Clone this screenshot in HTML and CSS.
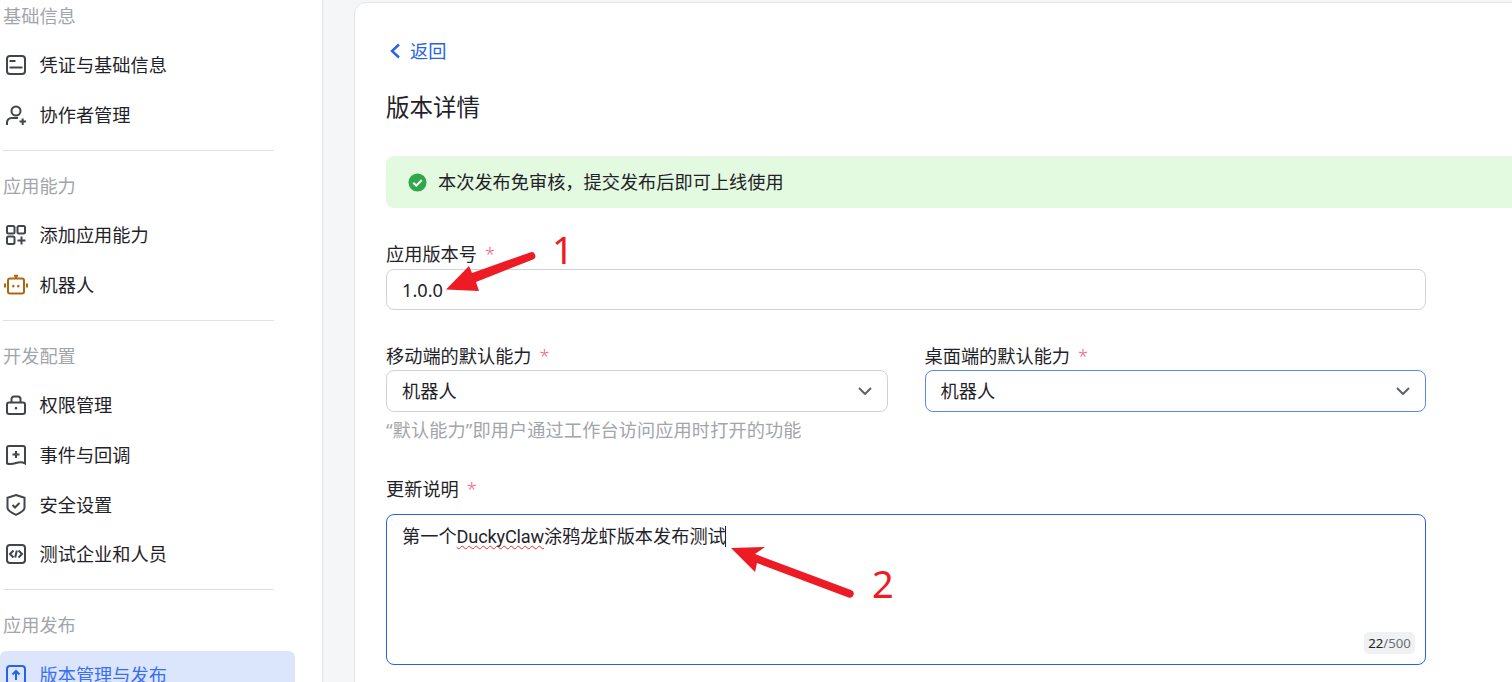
FILE: index.html
```html
<!DOCTYPE html>
<html lang="zh-CN">
<head>
<meta charset="utf-8">
<title>版本详情</title>
<link rel="stylesheet" href="styles.css">
</head>
<body>
<div class="page">
  <aside class="sidebar">
    <section class="group">
      <h3 class="group-title">基础信息</h3>
      <a class="item"><svg class="icon" viewBox="0 0 20 20"><rect x="1" y="1" width="18" height="18" rx="3"/><path d="M3.500 6h6M3.500 12.500h13"/></svg><span>凭证与基础信息</span></a>
      <a class="item"><svg class="icon" viewBox="0 0 20 20"><circle cx="10" cy="6" r="4.500"/><path d="M1 20v-2.500a4.500 4.500 0 0 1 4.500-4.500h6.500M13.500 16.500h6.500M16.700 13.500v6.500"/></svg><span>协作者管理</span></a>
    </section>
    <section class="group">
      <h3 class="group-title">应用能力</h3>
      <a class="item"><svg class="icon" viewBox="0 0 20 20"><rect x="1" y="1" width="7.500" height="7.500" rx="1.500"/><rect x="11.500" y="1" width="7.500" height="7.500" rx="1.500"/><rect x="1" y="11.500" width="7.500" height="7.500" rx="1.500"/><path d="M11.500 15.500h8M15.500 11.500v8"/></svg><span>添加应用能力</span></a>
      <a class="item"><svg class="icon icon-robot" viewBox="0 0 20 20"><rect x="2" y="3.500" width="16" height="15" rx="2"/><path d="M10 3.500V1M8 .800h4M-1 8.500v4M21 8.500v4"/><path class="dots" d="M7.300 11v.300M12.300 11v.300"/></svg><span>机器人</span></a>
    </section>
    <section class="group">
      <h3 class="group-title">开发配置</h3>
      <a class="item"><svg class="icon" viewBox="0 0 20 20"><rect x="1" y="7.500" width="18" height="11.500" rx="2"/><path d="M5.500 7.500V4a2.500 2.500 0 0 1 2.500-2.500h4a2.500 2.500 0 0 1 2.500 2.500v3.500"/><path class="dots" d="M10 13v.300"/></svg><span>权限管理</span></a>
      <a class="item"><svg class="icon" viewBox="0 0 20 20"><path d="M3 1h14a2 2 0 0 1 2 2v15.500c-3-2-6-1.500-9-.500s-6 1.500-9 .500V3a2 2 0 0 1 2-2z"/><path d="M6.500 9.500h7M10 6v7"/></svg><span>事件与回调</span></a>
      <a class="item"><svg class="icon" viewBox="0 0 20 20"><path d="M10 0l8.500 2.800v10c0 2.500-4 5-8.500 7-4.500-2-8.500-4.500-8.500-7v-10z"/><path d="M6.500 10l2.500 2.500 4.500-4.500"/></svg><span>安全设置</span></a>
      <a class="item"><svg class="icon" viewBox="0 0 20 20"><rect x="1" y="1" width="18" height="18" rx="3"/><path d="M7.500 6.500L4 10l3.500 3.500M12.500 6.500L16 10l-3.500 3.500M10.800 6.500L9.200 13.500"/></svg><span>测试企业和人员</span></a>
    </section>
    <section class="group group-last">
      <h3 class="group-title">应用发布</h3>
      <a class="item item-active"><svg class="icon" viewBox="0 0 20 20"><rect x="1" y="1" width="18" height="18" rx="3"/><path d="M10 15V6M6.500 9.500L10 6l3.500 3.500"/></svg><span>版本管理与发布</span></a>
    </section>
  </aside>
  <main class="main">
    <div class="card">
      <a class="back"><svg class="back-icon" viewBox="0 0 12 16"><path d="M10 1.500L3 8l7 6.500"/></svg><span>返回</span></a>
      <h1 class="title">版本详情</h1>
      <div class="banner">
        <svg class="banner-icon" viewBox="0 0 20 20"><circle cx="10" cy="10" r="9.500"/><path d="M5.500 10.300l3.200 3 5.800-6"/></svg>
        <span>本次发布免审核，提交发布后即可上线使用</span>
      </div>
      <form class="form">
        <div class="field">
          <label class="label">应用版本号<i class="star">*</i></label>
          <div class="input input-first">1.0.0</div>
        </div>
        <div class="row">
          <div class="field">
            <label class="label">移动端的默认能力<i class="star">*</i></label>
            <div class="input select"><span>机器人</span><svg class="chevron" viewBox="0 0 14 8"><path d="M1 1l6 6 6-6"/></svg></div>
          </div>
          <div class="field">
            <label class="label">桌面端的默认能力<i class="star">*</i></label>
            <div class="input select select-hover"><span>机器人</span><svg class="chevron" viewBox="0 0 14 8"><path d="M1 1l6 6 6-6"/></svg></div>
          </div>
        </div>
        <p class="hint">“默认能力”即用户通过工作台访问应用时打开的功能</p>
        <div class="field field-notes">
          <label class="label">更新说明<i class="star">*</i></label>
          <div class="textarea">第一个<span class="misspelt">DuckyClaw</span>涂鸦龙虾版本发布测试<i class="caret"></i><span class="count"><b>22</b>/500</span></div>
        </div>
      </form>
    </div>
  </main>
  <svg class="notes" viewBox="0 0 1512 682">
    <path class="arrow-body" d="M446 289.500L469 266l3 7 58-20.500a3.600 3.600 0 0 1 3 7L476 282l3 9z"/>
    <text class="note-num" x="552" y="264">1</text>
    <path class="arrow-body" d="M731 548l34-1-10 7 96 36a3.800 3.800 0 0 1-2.500 7.500L757 563l-2 9z"/>
    <text class="note-num" x="872" y="598">2</text>
  </svg>
</div>
</body>
</html>
```

FILE: styles.css
```css
* { box-sizing: border-box; }
html, body { margin: 0; height: 100%; overflow: hidden; background: #fff; }
body {
  font-family: "Noto Sans", "Noto Sans CJK SC", sans-serif;
  font-size: 18.2px;
  line-height: 24px;
  color: #1f2329;
}
.page { position: relative; display: flex; width: 1512px; height: 682px; overflow: hidden; }

.sidebar {
  flex: 0 0 323px;
  padding: 4px 0 0;
  border-right: 1px solid #e3e4e6;
  background: #fff;
}
.group { width: 295px; padding-bottom: 11px; margin-bottom: 23px; position: relative; }
.group::after {
  content: "";
  position: absolute;
  left: 3px;
  right: 21px;
  bottom: 0;
  height: 1px;
  background: #dfe0e2;
}
.group-last::after { display: none; }
.group-title {
  margin: 0 0 12.500px 3px;
  font-size: 18.2px;
  line-height: 24px;
  font-weight: 400;
  color: #a2a5aa;
}
.group:first-child .group-title { margin-bottom: 12px; }
.group-last .group-title { margin-bottom: 14px; }
.item { display: flex; align-items: center; gap: 13.500px; height: 49.800px; padding-left: 6px; color: #1f2329; }
.icon { flex: none; width: 20px; height: 20px; fill: none; stroke: #41454c; stroke-width: 2; overflow: visible; }
.icon .dots { stroke-width: 2.400; stroke-linecap: round; }
.icon-robot { stroke: #b3640f; }
.item-active { height: 47px; border-radius: 6px; background: #dbe6fd; color: #3a6ff0; }
.item-active .icon { stroke: #2563eb; }

.main { flex: 1; min-width: 0; padding: 2px 0 0 31px; background: #f5f6f8; }
.card {
  width: 1300px;
  height: 800px;
  padding: 36px 0 0 31px;
  border: 1px solid #e3e4e6;
  border-radius: 12px;
  background: #fff;
}
.back { display: flex; align-items: center; gap: 9px; padding-left: 3px; color: #2563eb; }
.back-icon { width: 12px; height: 16px; fill: none; stroke: #2563eb; stroke-width: 2.400; }
.title { margin: 28px 0 33px; font-size: 23.500px; line-height: 32px; font-weight: 400; color: #1f2329; }
.banner {
  display: flex;
  align-items: center;
  gap: 11px;
  height: 52px;
  padding-left: 22px;
  border-radius: 8px;
  background: #e3f9e0;
}
.banner-icon { flex: none; width: 19px; height: 19px; }
.banner-icon circle { fill: #2ea84a; }
.banner-icon path { fill: none; stroke: #fff; stroke-width: 2.200; }

.form { width: 1040px; margin-top: 34px; }
.label { display: block; }
.star { margin-left: 8px; color: #f2637b; font-style: normal; font-weight: 300; }
.input {
  display: flex;
  align-items: center;
  height: 42px;
  margin-top: 2px;
  padding: 0 15px;
  border: 1px solid #d0d3d6;
  border-radius: 8px;
  background: #fff;
}
.input-first { height: 41px; margin-top: 3px; }
.row { display: grid; grid-template-columns: 1fr 1fr; column-gap: 37px; margin-top: 34px; }
.select { justify-content: space-between; }
.select-hover { border-color: #5b8aee; }
.chevron { width: 14px; height: 8px; fill: none; stroke: #5f6368; stroke-width: 2; }
.hint { margin: 6px 0 0; color: #a2a5aa; letter-spacing: 0.100px; }
.field-notes { margin-top: 35px; }
.textarea {
  position: relative;
  height: 151px;
  margin-top: 13px;
  padding: 9px 15px;
  border: 1px solid #2563eb;
  border-radius: 8px;
  background: #fff;
}
.misspelt {
  font-family: Roboto, "Noto Sans", sans-serif;
  letter-spacing: -0.200px;
  text-decoration: underline wavy #e5352b 1px;
  text-decoration-skip-ink: none;
  text-underline-offset: 2px;
}
.caret { display: inline-block; width: 1px; height: 21px; margin-left: -1px; vertical-align: -4px; background: #1f2329; }
.count {
  position: absolute;
  right: 10px;
  bottom: 10px;
  width: 51px;
  height: 22px;
  border-radius: 5px;
  background: #f0f1f2;
  font-size: 13.200px;
  line-height: 22px;
  text-align: center;
  color: #6b7078;
}
.count b { font-weight: 400; color: #1f2329; }

.notes { position: absolute; left: 0; top: 0; width: 1512px; height: 682px; pointer-events: none; }
.arrow-body { fill: #ed1c24; stroke: none; }
.note-num { font-family: "Noto Sans", sans-serif; font-size: 38px; font-weight: 400; fill: #ed1c24; }
```
